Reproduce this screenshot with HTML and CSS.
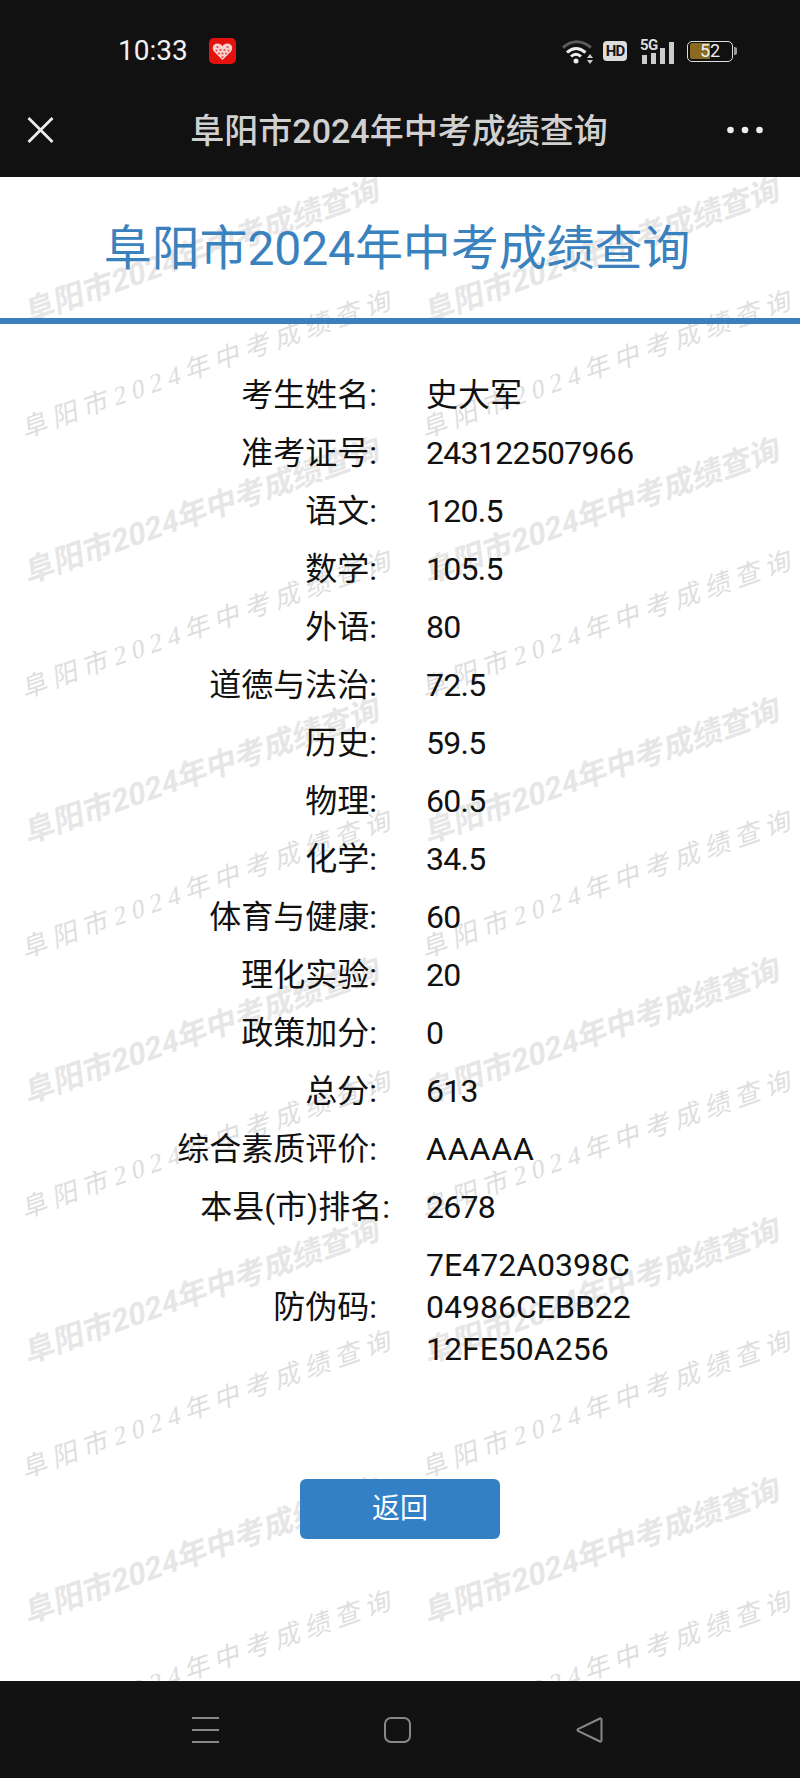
FILE: index.html
```html
<!DOCTYPE html>
<html lang="zh-CN">
<head>
<meta charset="utf-8">
<title>阜阳市2024年中考成绩查询</title>
<link rel="stylesheet" href="styles.css">
</head>
<body>
<header class="topbar">
  <div class="status">
    <div class="status-left">
      <span class="time">10:33</span>
      <svg class="app-icon" viewBox="0 0 27 26" aria-hidden="true">
        <rect width="27" height="26" rx="5" fill="#e3120f"/>
        <path d="M13.5 22 5 13.500C2.500 10.600 4 5.700 8.200 5.500c2.400-.1 4.200 1 5.300 2.700 1.100-1.700 2.900-2.800 5.300-2.700 4.200.2 5.700 5.100 3.200 8z" fill="#f4d3d3"/>
        <g fill="#e8403c">
          <circle cx="8.500" cy="9" r="1.100"/><circle cx="11.500" cy="12" r="1.100"/><circle cx="15.500" cy="12" r="1.100"/><circle cx="18.500" cy="9" r="1.100"/>
          <circle cx="7.500" cy="12.500" r="0.900"/><circle cx="19.500" cy="12.500" r="0.900"/><circle cx="10" cy="15.500" r="1"/><circle cx="13.500" cy="15.500" r="1.100"/><circle cx="17" cy="15.500" r="1"/><circle cx="13.500" cy="19" r="1"/>
        </g>
      </svg>
    </div>
    <div class="status-right">
      <svg class="wifi" viewBox="0 0 32 25" aria-hidden="true">
        <path d="M1 8.500Q14.500-3 29 8.500" class="wifi-dim"/>
        <path d="M5 13.500Q14 5.500 23.500 13.500" class="wifi-on"/>
        <path d="M9 17.500Q14 13 19 17.500" class="wifi-on"/>
        <circle cx="14" cy="22" r="2.500" fill="#eee"/>
        <path d="M25 19h6l-3-4zM25 21h6l-3 4z" fill="#ccc"/>
      </svg>
      <span class="hd">HD</span>
      <div class="signal">
        <span class="five-g">5G</span>
        <i class="bar bar-1"></i><i class="bar bar-2"></i><i class="bar bar-3"></i><i class="bar bar-4"></i>
      </div>
      <div class="battery"><i class="battery-fill"></i><span class="battery-text">52</span></div>
    </div>
  </div>
  <div class="toolbar">
    <svg class="close" viewBox="0 0 27 26" aria-hidden="true"><path d="M1.500 1 25.500 25M25.500 1 1.500 25"/></svg>
    <div class="toolbar-title">阜阳市2024年中考成绩查询</div>
    <svg class="more" viewBox="0 0 36 8" aria-hidden="true"><circle cx="3.500" cy="4" r="3.300"/><circle cx="18" cy="4" r="3.300"/><circle cx="32.500" cy="4" r="3.300"/></svg>
  </div>
</header>

<main class="page">
  <div class="watermarks" aria-hidden="true">
    <span class="wm wm-a">阜阳市2024年中考成绩查询</span><span class="wm wm-a">阜阳市2024年中考成绩查询</span>
    <span class="wm wm-b">阜阳市2024年中考成绩查询</span><span class="wm wm-b">阜阳市2024年中考成绩查询</span>
    <span class="wm wm-a">阜阳市2024年中考成绩查询</span><span class="wm wm-a">阜阳市2024年中考成绩查询</span>
    <span class="wm wm-b">阜阳市2024年中考成绩查询</span><span class="wm wm-b">阜阳市2024年中考成绩查询</span>
    <span class="wm wm-a">阜阳市2024年中考成绩查询</span><span class="wm wm-a">阜阳市2024年中考成绩查询</span>
    <span class="wm wm-b">阜阳市2024年中考成绩查询</span><span class="wm wm-b">阜阳市2024年中考成绩查询</span>
    <span class="wm wm-a">阜阳市2024年中考成绩查询</span><span class="wm wm-a">阜阳市2024年中考成绩查询</span>
    <span class="wm wm-b">阜阳市2024年中考成绩查询</span><span class="wm wm-b">阜阳市2024年中考成绩查询</span>
    <span class="wm wm-a">阜阳市2024年中考成绩查询</span><span class="wm wm-a">阜阳市2024年中考成绩查询</span>
    <span class="wm wm-b">阜阳市2024年中考成绩查询</span><span class="wm wm-b">阜阳市2024年中考成绩查询</span>
    <span class="wm wm-a">阜阳市2024年中考成绩查询</span><span class="wm wm-a">阜阳市2024年中考成绩查询</span>
    <span class="wm wm-b">阜阳市2024年中考成绩查询</span><span class="wm wm-b">阜阳市2024年中考成绩查询</span>
  </div>

  <h1 class="title">阜阳市2024年中考成绩查询</h1>

  <dl class="scores">
    <dt>考生姓名:</dt><dd class="name">史大军</dd>
    <dt>准考证号:</dt><dd>243122507966</dd>
    <dt>语文:</dt><dd>120.5</dd>
    <dt>数学:</dt><dd>105.5</dd>
    <dt>外语:</dt><dd>80</dd>
    <dt>道德与法治:</dt><dd>72.5</dd>
    <dt>历史:</dt><dd>59.5</dd>
    <dt>物理:</dt><dd>60.5</dd>
    <dt>化学:</dt><dd>34.5</dd>
    <dt>体育与健康:</dt><dd>60</dd>
    <dt>理化实验:</dt><dd>20</dd>
    <dt>政策加分:</dt><dd>0</dd>
    <dt>总分:</dt><dd>613</dd>
    <dt>综合素质评价:</dt><dd class="grade">AAAAA</dd>
    <dt class="wide">本县(市)排名:</dt><dd>2678</dd>
    <dt>防伪码:</dt><dd class="code">7E472A0398C04986CEBB2212FE50A256</dd>
  </dl>

  <a class="back" href="#">返回</a>
</main>

<nav class="navbar" aria-label="系统导航">
  <svg class="nav-icon" viewBox="0 0 27 26" aria-hidden="true"><path d="M0 1h27M0 13h27M0 25h27"/></svg>
  <svg class="nav-icon" viewBox="0 0 27 26" aria-hidden="true"><rect x="1" y="1" width="25" height="24" rx="6"/></svg>
  <svg class="nav-icon" viewBox="0 0 27 26" aria-hidden="true"><path d="M24 1.500 2 12a1.200 1.200 0 0 0 0 2l22 10.500c.6.300 1.500 0 1.500-1V2.500c0-1-.9-1.300-1.500-1z"/></svg>
</nav>
</body>
</html>
```

FILE: styles.css
```css
* { box-sizing: border-box; }

html, body { margin: 0; padding: 0; }

body {
  display: flex;
  flex-direction: column;
  height: 1778px;
  overflow: hidden;
  background: #fff;
  color: #111;
  font-family: Roboto, "Noto Sans CJK SC", sans-serif;
}

/* Top chrome */
.topbar { background: #111; color: #eee; flex: none; }

.status {
  display: flex;
  justify-content: space-between;
  align-items: center;
  height: 83px;
  padding: 38px 64px 19px 118px;
}

.status-left { display: flex; align-items: center; gap: 21px; }

.time { font-size: 28px; line-height: 26px; color: #f2f2f2; }

.app-icon { width: 27px; height: 26px; display: block; }

.status-right { display: flex; align-items: center; }

.wifi { width: 32px; height: 25px; display: block; margin-right: 9px; fill: none; }
.wifi-dim { fill: none; stroke: #5a5a5a; stroke-width: 3; }
.wifi-on { fill: none; stroke: #eee; stroke-width: 3; }

.hd {
  width: 24px;
  height: 20px;
  margin-right: 13px;
  border-radius: 4px;
  background: #ddd;
  color: #151515;
  font-size: 15px;
  font-weight: 700;
  line-height: 20px;
  letter-spacing: -0.8px;
  text-align: center;
}

.signal {
  position: relative;
  display: flex;
  align-items: flex-end;
  gap: 4px;
  width: 34px;
  height: 25px;
  padding-left: 2px;
  margin-right: 13px;
}

.five-g {
  position: absolute;
  left: 0;
  top: -1px;
  font-size: 15px;
  font-weight: 700;
  line-height: 14px;
  letter-spacing: -0.5px;
  color: #ddd;
}

.bar { display: block; width: 5px; background: #ccc; }
.bar-1 { height: 9px; }
.bar-2 { height: 11px; }
.bar-3 { height: 16px; }
.bar-4 { height: 22px; }

.battery {
  position: relative;
  display: flex;
  align-items: center;
  justify-content: center;
  width: 46px;
  height: 21px;
  border: 1.5px solid #ddd;
  border-radius: 5px;
  margin-right: 3px;
}

.battery::after {
  content: "";
  position: absolute;
  right: -5px;
  top: 5px;
  width: 3px;
  height: 8px;
  border-radius: 0 2px 2px 0;
  background: #999;
}

.battery-fill {
  position: absolute;
  left: 1.500px;
  top: 1.500px;
  bottom: 1.500px;
  width: 20px;
  border-radius: 2px 0 0 2px;
  background: #8a6a1f;
}

.battery-text {
  position: relative;
  font-size: 18px;
  line-height: 18px;
  color: #eee;
}

.toolbar {
  display: grid;
  grid-template-columns: 1fr auto 1fr;
  align-items: center;
  height: 94px;
  padding: 2px 37px 0 27px;
}

.close { width: 27px; height: 26px; display: block; margin-top: -2px; }
.close path { fill: none; stroke: #eee; stroke-width: 2.800; }

.toolbar-title {
  font-size: 34px;
  line-height: 48px;
  font-weight: 500;
  color: #d0d0d0;
  white-space: nowrap;
  transform: translateX(4px);
}

.more { width: 36px; height: 8px; display: block; justify-self: end; fill: #eee; margin-top: -2px; }

/* Page */
.page {
  position: relative;
  flex: 1;
  min-height: 0;
  overflow: hidden;
  background: #fff;
}

.watermarks {
  position: absolute;
  inset: 0;
  display: grid;
  grid-template-columns: 400px 400px;
  grid-auto-rows: 130px;
  padding-top: 6px;
  pointer-events: none;
}

.wm {
  align-self: center;
  justify-self: center;
  white-space: nowrap;
}

.wm-a {
  font-size: 30.500px;
  font-weight: 700;
  color: #e6e6e6;
  transform: translateX(2px) rotate(-19.500deg) skewX(-12deg);
}

.wm-b {
  font-family: "Liberation Serif", "Noto Sans CJK SC", serif;
  font-size: 26px;
  letter-spacing: 6px;
  color: #dedede;
  transform: translate(10px, -18px) rotate(-19.500deg) skewX(-14deg);
}

.title {
  position: relative;
  margin: 0;
  padding: 37px 6px 34px 0;
  border-bottom: 6px solid #3a80bd;
  font-size: 48px;
  font-weight: 400;
  line-height: 70px;
  letter-spacing: -0.1px;
  text-align: center;
  white-space: nowrap;
  color: #3a82be;
}

.scores {
  position: relative;
  display: grid;
  grid-template-columns: 377px 210px;
  column-gap: 49px;
  margin: 42px 0 0;
  font-size: 32px;
  line-height: 42px;
}

.scores dt,
.scores dd {
  margin: 0;
  padding: 8px 0;
  align-self: center;
}

.scores dt { text-align: right; white-space: nowrap; }
.scores dt.wide { margin-right: -13px; }
.scores dd { letter-spacing: -0.7px; }
.scores dd.name { letter-spacing: 0; }
.scores dd.grade { letter-spacing: 0.9px; }
.scores dd.code { word-break: break-all; letter-spacing: 0; }

.back {
  position: relative;
  display: block;
  width: 200px;
  height: 60px;
  margin: 101px auto 0;
  border-radius: 6px;
  background: #3380c6;
  color: #fff;
  font-size: 28px;
  line-height: 60px;
  text-align: center;
  text-decoration: none;
}

/* Bottom navigation */
.navbar {
  flex: none;
  display: flex;
  align-items: center;
  justify-content: center;
  gap: 165px;
  height: 97px;
  padding-right: 5px;
  background: #121212;
}

.nav-icon { width: 27px; height: 26px; display: block; }
.nav-icon path, .nav-icon rect { fill: none; stroke: #888; stroke-width: 2; }
```
